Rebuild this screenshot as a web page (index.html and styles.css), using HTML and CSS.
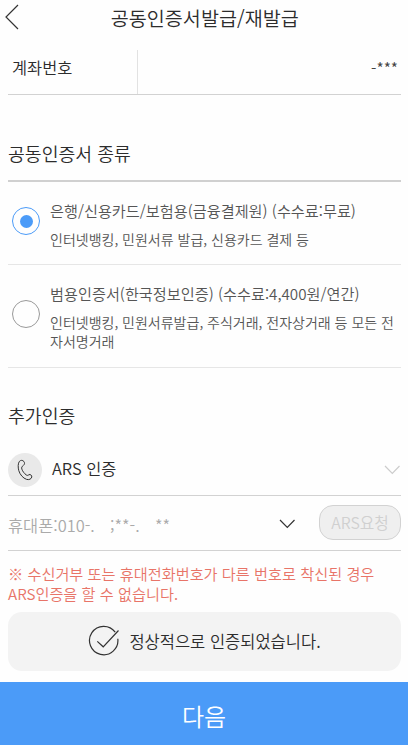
FILE: index.html
```html
<!DOCTYPE html>
<html lang="ko">
<head>
<meta charset="utf-8">
<meta name="viewport" content="width=device-width, initial-scale=1">
<title>공동인증서발급/재발급</title>
<link rel="stylesheet" href="styles.css">
</head>
<body>
<header class="top">
    <a class="back" href="#">
        <svg width="14" height="26" viewBox="0 0 14 26"><path d="M13 1 L1 13 L13 25"/></svg>
    </a>
    <h1>공동인증서발급/재발급</h1>
</header>

<main class="content">
    <div class="account">
        <div class="account-label">계좌번호</div>
        <div class="account-num">-***</div>
    </div>

    <h2 class="kind-title">공동인증서 종류</h2>
    <div class="kinds">
        <label class="kind">
            <span class="radio on"></span>
            <span class="kind-text">
                <span class="kind-name">은행/신용카드/보험용(금융결제원) (수수료:무료)</span>
                <span class="kind-desc">인터넷뱅킹, 민원서류 발급, 신용카드 결제 등</span>
            </span>
        </label>
        <label class="kind kind-general">
            <span class="radio"></span>
            <span class="kind-text">
                <span class="kind-name">범용인증서(한국정보인증) (수수료:4,400원/연간)</span>
                <span class="kind-desc">인터넷뱅킹, 민원서류발급, 주식거래, 전자상거래 등 모든 전<br>자서명거래</span>
            </span>
        </label>
    </div>

    <h2 class="auth-title">추가인증</h2>
    <div class="method">
        <span class="phone-icon">
            <svg width="34" height="34" viewBox="0 0 34 34"><path d="M11.4 8.4 C12.6 7 14.7 7 15.9 8.5 C16.9 9.9 16.7 11.4 15.4 12.4 C13.8 13.6 13.3 14.5 13.9 16.2 C14.6 18.3 16.2 20.4 18.2 21.9 C19.4 22.8 20 22.4 21 21.6 C22.5 21.2 24 22.4 23.8 24 C23.4 26 21 27.1 18.6 26.4 C15 25.1 12.1 21.8 10.8 17.7 C9.9 14.4 9.9 10.3 11.4 8.4 Z"/></svg>
        </span>
        <span class="method-name">ARS 인증</span>
        <svg class="arrow" width="16" height="10" viewBox="0 0 16 10"><path d="M1 1 L8.3 8.5 L15.5 1"/></svg>
    </div>
    <div class="phone">
        <span class="phone-num"><span class="prefix">휴대폰:010-.</span><span class="middle">;**-.</span><span>**</span></span>
        <svg class="arrow arrow-dark" width="16" height="10" viewBox="0 0 16 10"><path d="M1 1 L8.3 8.5 L15.5 1"/></svg>
        <button class="request" disabled>ARS요청</button>
    </div>

    <p class="notice">※ 수신거부 또는 휴대전화번호가 다른 번호로 착신된 경우<br>ARS인증을 할 수 없습니다.</p>
    <div class="result">
        <svg width="32" height="32" viewBox="0 0 32 32"><path d="M27.2 7.2 A14.2 14.2 0 1 0 29.8 13.8"/><path d="M9.3 16.4 L15.2 21.8 L30.5 5.5"/></svg>
        <span>정상적으로 인증되었습니다.</span>
    </div>
</main>

<button class="next">다음</button>
</body>
</html>
```

FILE: styles.css
```css
* {
    box-sizing: border-box;
}
body {
    margin: 0;
    height: 745px;
    display: flex;
    flex-direction: column;
    overflow: hidden;
    background: #fefefe;
    color: #2c2c2c;
    font-family: "Noto Sans CJK KR", "Noto Sans", sans-serif;
    font-weight: 350;
}
h1, h2, p {
    margin: 0;
    font-weight: 350;
}
h1 {
    flex: 1;
    padding-right: 17px;
    font-size: 19.6px;
    line-height: 35px;
    text-align: center;
}
h2 {
    font-size: 18.3px;
    line-height: 26px;
}
svg {
    display: block;
    flex: none;
    fill: none;
    stroke: #333;
    stroke-width: 1.2;
}
button {
    padding: 0;
    border: 0;
    font-family: inherit;
    font-weight: 350;
}

.top {
    display: flex;
    height: 50px;
    padding-left: 4.5px;
}
.back {
    width: 14px;
    padding-top: 4px;
}

.content {
    flex: 1;
    padding: 0 7px 0 8px;
}
.account {
    display: flex;
    height: 45px;
    border-bottom: 1px solid #d2d2d2;
}
.account-label {
    width: 130px;
    padding-left: 4px;
    border-right: 1px solid #e2e2e2;
    font-size: 16.4px;
    line-height: 35px;
}
.account-num {
    flex: 1;
    padding-right: 3px;
    color: #444;
    font-size: 15.6px;
    line-height: 34px;
    text-align: right;
}

.kind-title {
    padding-top: 45px;
    height: 85px;
}
.kinds {
    border-top: 2px solid #d0d0d0;
}
.kind {
    display: flex;
    align-items: center;
    height: 83px;
    border-bottom: 1px solid #e6e6e6;
    color: #555;
}
.kind-general {
    height: 103px;
}
.radio {
    display: flex;
    align-items: center;
    justify-content: center;
    flex: none;
    width: 28px;
    height: 28px;
    margin: 0 10px 4px 4px;
    border: 1px solid #999;
    border-radius: 50%;
}
.radio.on {
    border-color: #4b9bf8;
}
.radio.on::after {
    content: "";
    width: 13px;
    height: 13px;
    border-radius: 50%;
    background: #4b9bf8;
}
.kind-name, .kind-desc {
    display: block;
    white-space: nowrap;
}
.kind-name {
    font-size: 15.2px;
    line-height: 24px;
}
.kind-desc {
    padding-top: 8px;
    font-size: 14px;
    line-height: 19px;
}

.auth-title {
    padding-top: 34px;
    height: 84px;
}
.method {
    display: flex;
    align-items: center;
    height: 44px;
    padding-bottom: 8px;
    border-bottom: 1px solid #d2d2d2;
}
.phone-icon {
    width: 34px;
    height: 34px;
    border-radius: 50%;
    background: #e9e9e9;
}
.phone-icon svg {
    stroke-width: 1;
}
.method-name {
    flex: 1;
    padding: 0 0 4px 10px;
    font-size: 16.4px;
}
.arrow {
    stroke: #ccc;
    margin-right: 1px;
}
.arrow-dark {
    stroke: #333;
    margin: 4px 24px 0 0;
}
.phone {
    display: flex;
    align-items: center;
    height: 55px;
    padding-bottom: 2px;
    border-bottom: 1px solid #d2d2d2;
}
.phone-num {
    display: flex;
    flex: 1;
    padding-top: 5px;
    color: #aaa;
    font-size: 16.4px;
}
.prefix {
    width: 102px;
}
.middle {
    width: 45px;
}
.request {
    width: 82px;
    height: 35px;
    border: 1px solid #d2d2d2;
    border-radius: 14px;
    background: #efefef;
    color: #d0d0d0;
    font-size: 15.8px;
}

.notice {
    padding-top: 12px;
    height: 61px;
    color: #e87468;
    font-size: 15.2px;
    line-height: 20px;
    white-space: nowrap;
}
.result {
    display: flex;
    align-items: center;
    justify-content: center;
    gap: 9px;
    height: 59px;
    padding-bottom: 1px;
    border-radius: 14px;
    background: #f3f3f3;
    font-size: 16.5px;
}

.next {
    height: 63px;
    padding-top: 3px;
    background: #4b9bf8;
    color: #fff;
    font-size: 24px;
}
```
